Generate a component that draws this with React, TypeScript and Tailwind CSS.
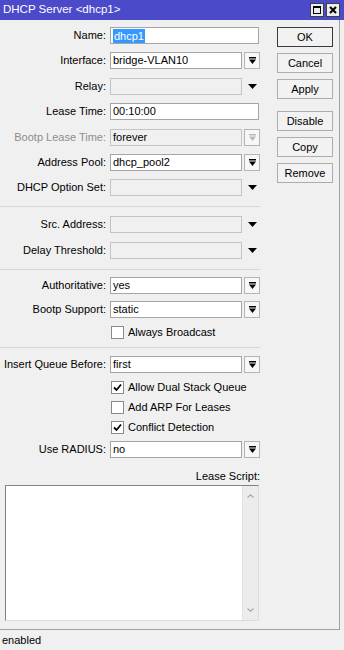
import React from "react";

const font = { fontFamily: '"Liberation Sans", Arial, sans-serif' };

function DropIcon({ disabled }: { disabled?: boolean }) {
  const c = disabled ? "#b8b8b8" : "#000";
  return (
    <svg width="7" height="7" viewBox="0 0 7 7">
      <rect x="0" y="0" width="7" height="1.5" fill={c} />
      <polygon points="0,2.5 7,2.5 3.5,7" fill={c} />
    </svg>
  );
}

function Triangle() {
  return (
    <svg width="9" height="5" viewBox="0 0 9 5">
      <polygon points="0,0 9,0 4.5,5" fill="#000" />
    </svg>
  );
}

type FieldProps = {
  label: string;
  value?: string;
  kind: "text" | "drop" | "tri";
  disabled?: boolean;
  labelGray?: boolean;
  selected?: boolean;
  mt: string;
};

function Field({ label, value, kind, disabled, labelGray, selected, mt }: FieldProps) {
  return (
    <div className={`flex items-center h-[17px] ${mt}`}>
      <div className={`w-[106px] text-right whitespace-nowrap ${labelGray ? "text-[#8d8d8d]" : "text-black"}`}>
        {label}
      </div>
      <div
        className={`ml-[4px] h-[17px] border flex items-center pl-[2px] whitespace-nowrap ${
          kind === "text" ? "w-[149px]" : "w-[132px]"
        } ${disabled ? "bg-[#f0f0f0] border-[#c4c4c4]" : "bg-white border-[#a5a5a5]"}`}
      >
        {selected ? <span className="bg-[#3399ff] text-white px-[1px] leading-[14px]">{value}</span> : value}
      </div>
      {kind === "drop" && (
        <div className="ml-[2px] w-[16px] h-[17px] border border-[#b4b4b4] bg-[#f7f7f7] flex items-center justify-center">
          <DropIcon disabled={disabled} />
        </div>
      )}
      {kind === "tri" && (
        <div className="ml-[2px] w-[16px] h-[17px] flex items-center justify-center">
          <Triangle />
        </div>
      )}
    </div>
  );
}

function Check({ label, checked, mt }: { label: string; checked?: boolean; mt: string }) {
  return (
    <div className={`flex items-center h-[17px] pl-[111px] ${mt}`}>
      <div className="w-[13px] h-[13px] border border-[#8a8a8a] bg-white flex items-center justify-center">
        {checked && (
          <svg width="9" height="9" viewBox="0 0 9 9">
            <polyline points="1,4.5 3.5,7 8,1.5" fill="none" stroke="#000" strokeWidth="1.8" />
          </svg>
        )}
      </div>
      <span className="ml-[4px] text-black">{label}</span>
    </div>
  );
}

function Sep({ mt }: { mt: string }) {
  return <div className={`h-px w-[260px] bg-[#d6d6d6] ${mt}`} />;
}

function Btn({ label, def, mt }: { label: string; def?: boolean; mt: string }) {
  return (
    <div
      className={`w-[56px] h-[20px] flex items-center justify-center bg-[#f2f2f2] border ${
        def ? "border-[#3a3a3a]" : "border-[#adadad]"
      } ${mt}`}
    >
      {label}
    </div>
  );
}

export default function App() {
  return (
    <div className="w-[344px] h-[650px] bg-[#f0f0f0] text-[11px] text-black flex flex-col" style={font}>
      {/* Title bar */}
      <div className="h-[20px] bg-[#4b4bca] flex items-center pl-[3px] pr-[4px]">
        <span className="text-white text-[11.5px] flex-1">DHCP Server &lt;dhcp1&gt;</span>
        <div className="w-[14px] h-[14px] bg-[#ececec] border border-[#404040] flex items-center justify-center">
          <div className="w-[8px] h-[8px] border border-black border-t-2" />
        </div>
        <div className="ml-[2px] w-[14px] h-[14px] bg-[#ececec] border border-[#404040] flex items-center justify-center">
          <svg width="8" height="8" viewBox="0 0 8 8">
            <path d="M1 1 L7 7 M7 1 L1 7" stroke="#000" strokeWidth="2" />
          </svg>
        </div>
      </div>

      {/* Body */}
      <div className="w-[340px] h-[610px] border-r border-b border-[#a0a0a0] flex">
        <div className="w-[262px] flex flex-col">
          <Field label="Name:" value="dhcp1" kind="text" selected mt="mt-[7px]" />
          <Field label="Interface:" value="bridge-VLAN10" kind="drop" mt="mt-[8px]" />
          <Field label="Relay:" kind="tri" disabled mt="mt-[9px]" />
          <Field label="Lease Time:" value="00:10:00" kind="text" mt="mt-[8px]" />
          <Field label="Bootp Lease Time:" value="forever" kind="drop" disabled labelGray mt="mt-[9px]" />
          <Field label="Address Pool:" value="dhcp_pool2" kind="drop" mt="mt-[8px]" />
          <Field label="DHCP Option Set:" kind="tri" disabled mt="mt-[8px]" />
          <Sep mt="mt-[10px]" />
          <Field label="Src. Address:" kind="tri" disabled mt="mt-[9px]" />
          <Field label="Delay Threshold:" kind="tri" disabled mt="mt-[9px]" />
          <Sep mt="mt-[10px]" />
          <Field label="Authoritative:" value="yes" kind="drop" mt="mt-[7px]" />
          <Field label="Bootp Support:" value="static" kind="drop" mt="mt-[7px]" />
          <Check label="Always Broadcast" mt="mt-[6px]" />
          <Sep mt="mt-[6px]" />
          <Field label="Insert Queue Before:" value="first" kind="drop" mt="mt-[8px]" />
          <Check label="Allow Dual Stack Queue" checked mt="mt-[6px]" />
          <Check label="Add ARP For Leases" mt="mt-[3px]" />
          <Check label="Conflict Detection" checked mt="mt-[3px]" />
          <Field label="Use RADIUS:" value="no" kind="drop" mt="mt-[5px]" />
          <div className="mt-[12px] w-[260px] text-right leading-[13px]">Lease Script:</div>
          <div className="mt-[2px] ml-[5px] w-[254px] h-[136px] bg-white border border-[#828282] border-r-[#dcdcdc] border-b-[#dcdcdc] flex justify-end">
            <div className="w-[16px] h-full bg-[#ececec] border-l border-[#e2e2e2] flex flex-col items-center justify-between py-[8px]">
              <svg width="7" height="4" viewBox="0 0 7 4">
                <polyline points="0.5,3.5 3.5,0.8 6.5,3.5" fill="none" stroke="#a8a8a8" strokeWidth="1.2" />
              </svg>
              <svg width="7" height="4" viewBox="0 0 7 4">
                <polyline points="0.5,0.5 3.5,3.2 6.5,0.5" fill="none" stroke="#a8a8a8" strokeWidth="1.2" />
              </svg>
            </div>
          </div>
        </div>

        <div className="flex flex-col pl-[15px]">
          <Btn label="OK" def mt="mt-[7px]" />
          <Btn label="Cancel" mt="mt-[6px]" />
          <Btn label="Apply" mt="mt-[6px]" />
          <Btn label="Disable" mt="mt-[12px]" />
          <Btn label="Copy" mt="mt-[6px]" />
          <Btn label="Remove" mt="mt-[6px]" />
        </div>
      </div>

      {/* Status bar */}
      <div className="flex-1 flex items-center pl-[2px]">enabled</div>
    </div>
  );
}
